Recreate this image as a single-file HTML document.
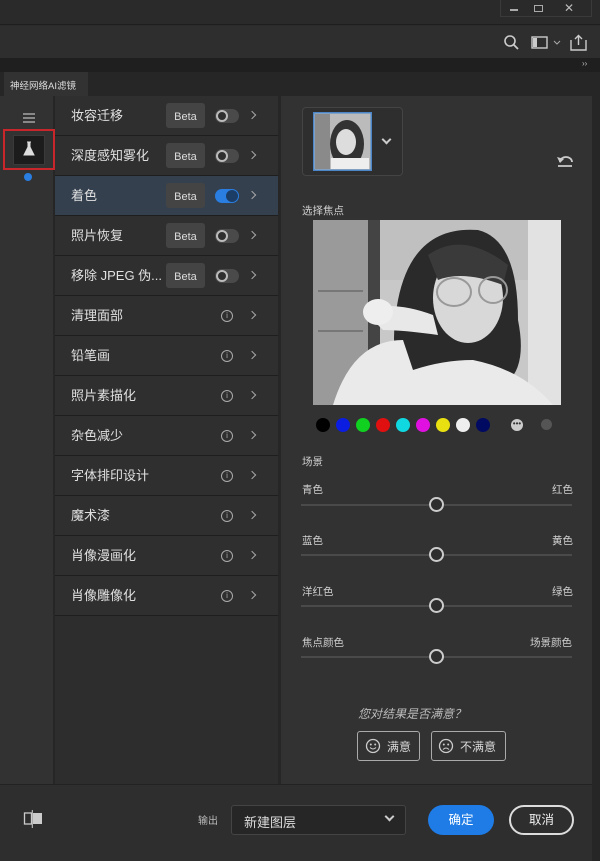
<!DOCTYPE html>
<html><head><meta charset="utf-8"><style>
*{margin:0;padding:0;box-sizing:border-box}
body{width:600px;height:861px;background:#2b2b2b;font-family:"Liberation Sans","Noto Sans CJK SC",sans-serif;color:#d8d8d8;position:relative;overflow:hidden}
.a{position:absolute}
.row{position:absolute;left:55px;width:223px;height:40px;background:#2f2f2f;border-bottom:1px solid #1e1e1e;font-size:13px}
.row .t{position:absolute;left:16px;top:10px;color:#e0e0e0;line-height:20px}
.beta{position:absolute;left:111px;top:7px;width:39px;height:25px;background:#444;border-radius:3px;font-size:11px;color:#ddd;display:flex;align-items:center;justify-content:center;padding-top:2px}
.tg{position:absolute;left:160px;top:13px;width:24px;height:14px;border-radius:7px;background:#4a4a4a}
.tg i{position:absolute;left:1px;top:1px;width:12px;height:12px;border-radius:50%;border:2px solid #bbb;background:#2f2f2f}
.chev{position:absolute;left:194px;top:16px;width:6px;height:6px;border-right:1.6px solid #aaa;border-top:1.6px solid #aaa;transform:rotate(45deg)}
.info{position:absolute;left:166px;top:14px;width:12px;height:12px;border:1.3px solid #aaa;border-radius:50%;font-size:8px;line-height:10px;text-align:center;color:#aaa}
.lbl{position:absolute;font-size:10.5px;color:#d0d0d0}
.sl{position:absolute;left:301px;width:271px;height:2px;background:#4a4a4a}
.kn{position:absolute;left:429px;width:15px;height:15px;border-radius:50%;border:2px solid #ccc;background:#2e2e2e}
.dot{position:absolute;top:418px;width:14px;height:14px;border-radius:50%}
</style></head><body>
<div class="a" style="left:0;top:0;width:600px;height:25px;background:#2a2a2a;border-bottom:1px solid #1e1e1e"></div>
<div class="a" style="left:500px;top:0;width:92px;height:17px;border:1px solid #3a3a3a;border-top:none"></div>
<div class="a" style="left:510px;top:9px;width:8px;height:2px;background:#aaa"></div>
<div class="a" style="left:534px;top:5px;width:9px;height:7px;border:1.5px solid #aaa"></div>
<div class="a" style="left:564px;top:1px;font-size:12px;color:#bbb">✕</div>
<div class="a" style="left:0;top:26px;width:600px;height:32px;background:#2e2e2e"></div>
<svg class="a" style="left:503px;top:34px" width="90" height="18"><circle cx="7" cy="7" r="5" fill="none" stroke="#ccc" stroke-width="1.6"/><line x1="11" y1="11" x2="15" y2="15" stroke="#ccc" stroke-width="1.8"/><rect x="29" y="3" width="15" height="11" fill="none" stroke="#ccc" stroke-width="1.4"/><rect x="30" y="4" width="4" height="9" fill="#ccc"/><path d="M51 7l3 3 3-3" stroke="#aaa" fill="none"/><path d="M68 6v10h15V6M75.5 2v9M72 5l3.5-3.5L79 5" stroke="#ccc" fill="none" stroke-width="1.4"/></svg>
<div class="a" style="left:0;top:58px;width:600px;height:14px;background:#1f1f1f"></div>
<div class="a" style="left:582px;top:59px;font-size:8px;color:#bbb">››</div>
<div class="a" style="left:0;top:72px;width:595px;height:24px;background:#262626"></div>
<div class="a" style="left:4px;top:72px;width:84px;height:24px;background:#323232;font-size:9.5px;color:#ddd;padding:6px 0 0 6px">神经网络AI滤镜</div>
<div class="a" style="left:0;top:96px;width:592px;height:688px;background:#323232"></div>
<div class="a" style="left:592px;top:72px;width:8px;height:789px;background:#262626"></div>
<div class="a" style="left:53px;top:96px;width:2px;height:688px;background:#262626"></div>
<div class="a" style="left:278px;top:96px;width:3px;height:688px;background:#262626"></div>
<div class="a" style="left:55px;top:96px;width:223px;height:688px;background:#2d2d2d"></div>
<div class="a" style="left:23px;top:113px;width:12px;height:1.5px;background:#888;box-shadow:0 4px 0 #888,0 8px 0 #888"></div>
<div class="a" style="left:3px;top:129px;width:52px;height:41px;border:2px solid #c8262b"></div>
<div class="a" style="left:13px;top:135px;width:32px;height:30px;background:#1c1c1c;border:1px solid #3a3a3a"></div>
<svg class="a" style="left:22px;top:141px" width="14" height="16"><path d="M5 1h4M6 1v5L2 14h10L8 6V1" fill="#ddd" stroke="#ddd"/></svg>
<div class="a" style="left:24px;top:173px;width:8px;height:8px;border-radius:50%;background:#2a7de1"></div>

<div class="row" style="top:96px"><span class="t">妆容迁移</span><div class="beta">Beta</div><div class="tg"><i></i></div><div class="chev"></div></div>
<div class="row" style="top:136px"><span class="t">深度感知雾化</span><div class="beta">Beta</div><div class="tg"><i></i></div><div class="chev"></div></div>
<div class="row" style="top:176px;background:#34404e"><span class="t">着色</span><div class="beta">Beta</div><div class="tg" style="background:#2a7de1"><i style="left:11px;border-color:#1b3d66;background:#1b3d66"></i></div><div class="chev"></div></div>
<div class="row" style="top:216px"><span class="t">照片恢复</span><div class="beta">Beta</div><div class="tg"><i></i></div><div class="chev"></div></div>
<div class="row" style="top:256px"><span class="t">移除 JPEG 伪...</span><div class="beta">Beta</div><div class="tg"><i></i></div><div class="chev"></div></div>
<div class="row" style="top:296px"><span class="t">清理面部</span><div class="info">i</div><div class="chev"></div></div>
<div class="row" style="top:336px"><span class="t">铅笔画</span><div class="info">i</div><div class="chev"></div></div>
<div class="row" style="top:376px"><span class="t">照片素描化</span><div class="info">i</div><div class="chev"></div></div>
<div class="row" style="top:416px"><span class="t">杂色减少</span><div class="info">i</div><div class="chev"></div></div>
<div class="row" style="top:456px"><span class="t">字体排印设计</span><div class="info">i</div><div class="chev"></div></div>
<div class="row" style="top:496px"><span class="t">魔术漆</span><div class="info">i</div><div class="chev"></div></div>
<div class="row" style="top:536px"><span class="t">肖像漫画化</span><div class="info">i</div><div class="chev"></div></div>
<div class="row" style="top:576px"><span class="t">肖像雕像化</span><div class="info">i</div><div class="chev"></div></div>

<div class="a" style="left:302px;top:107px;width:101px;height:69px;border:1px solid #444;border-radius:4px;background:#2e2e2e"></div>
<svg class="a" style="left:313px;top:112px" width="59" height="59"><rect x="0.5" y="0.5" width="58" height="58" fill="#bbb" stroke="#4a86c8" stroke-width="2"/><rect x="2" y="2" width="15" height="55" fill="#8a8a8a"/><ellipse cx="34" cy="32" rx="17" ry="24" fill="#333"/><ellipse cx="33" cy="30" rx="10" ry="13" fill="#ddd"/><rect x="18" y="46" width="38" height="11" fill="#eee"/></svg>
<div class="a" style="left:383px;top:136px;width:7px;height:7px;border-right:2px solid #ccc;border-bottom:2px solid #ccc;transform:rotate(45deg)"></div>
<svg class="a" style="left:556px;top:154px" width="18" height="14"><path d="M2 12h14M4 8a6 5 0 0 1 12 0" stroke="#ccc" fill="none" stroke-width="1.8"/><path d="M1 3l3 6 4-4z" fill="#ccc"/></svg>
<div class="lbl" style="left:302px;top:203px">选择焦点</div>
<svg class="a" style="left:313px;top:220px" width="248" height="185"><rect width="248" height="185" fill="#c8c8c8"/><rect x="0" y="0" width="55" height="185" fill="#9a9a9a"/><rect x="5" y="70" width="45" height="2" fill="#777"/><rect x="5" y="110" width="45" height="2" fill="#777"/><rect x="55" y="0" width="12" height="185" fill="#444"/><rect x="67" y="0" width="153" height="60" fill="#c0c0c0"/><rect x="215" y="0" width="33" height="185" fill="#e2e2e2"/><path d="M85 80 Q100 5 165 10 Q205 20 205 100 Q215 150 190 165 L90 170 Q75 130 85 80z" fill="#2a2a2a"/><ellipse cx="155" cy="78" rx="35" ry="45" fill="#d8d8d8"/><path d="M115 35 Q150 10 195 45 L190 65 Q150 50 125 60z" fill="#3a3a3a"/><ellipse cx="141" cy="72" rx="17" ry="14" fill="none" stroke="#999" stroke-width="2"/><ellipse cx="180" cy="70" rx="14" ry="13" fill="none" stroke="#999" stroke-width="2"/><path d="M50 90 Q80 80 120 95 L125 115 Q90 110 70 110z" fill="#e8e8e8"/><ellipse cx="65" cy="92" rx="15" ry="13" fill="#eee"/><path d="M20 185 Q40 120 90 120 L100 150 Q130 140 160 140 Q210 150 240 185z" fill="#eaeaea"/></svg>
<div class="dot" style="left:316px;background:#000"></div>
<div class="dot" style="left:336px;background:#0a1de0"></div>
<div class="dot" style="left:356px;background:#10d020"></div>
<div class="dot" style="left:376px;background:#e01010"></div>
<div class="dot" style="left:396px;background:#10d8e0"></div>
<div class="dot" style="left:416px;background:#e010e0"></div>
<div class="dot" style="left:436px;background:#e8e010"></div>
<div class="dot" style="left:456px;background:#eee"></div>
<div class="dot" style="left:476px;background:#000a60"></div>
<div class="a" style="left:511px;top:419px;width:12px;height:12px;border-radius:50%;background:#ccc;font-size:8px;color:#333;text-align:center;line-height:9px">•••</div>
<div class="a" style="left:541px;top:419px;width:11px;height:11px;border-radius:50%;background:#555"></div>
<div class="lbl" style="left:302px;top:454px">场景</div>
<div class="lbl" style="left:302px;top:482px">青色</div><div class="lbl" style="left:552px;top:482px">红色</div>
<div class="sl" style="top:504px"></div><div class="kn" style="top:497px"></div>
<div class="lbl" style="left:302px;top:533px">蓝色</div><div class="lbl" style="left:552px;top:533px">黄色</div>
<div class="sl" style="top:554px"></div><div class="kn" style="top:547px"></div>
<div class="lbl" style="left:302px;top:584px">洋红色</div><div class="lbl" style="left:552px;top:584px">绿色</div>
<div class="sl" style="top:605px"></div><div class="kn" style="top:598px"></div>
<div class="lbl" style="left:302px;top:635px">焦点颜色</div><div class="lbl" style="left:530px;top:635px">场景颜色</div>
<div class="sl" style="top:656px"></div><div class="kn" style="top:649px"></div>
<div class="a" style="left:358px;top:705px;font-size:12px;font-style:italic;color:#bbb">您对结果是否满意？</div>
<div class="a" style="left:357px;top:731px;width:63px;height:30px;border:1px solid #aaa;border-radius:3px;font-size:12px;padding:6px 0 0 29px">满意</div>
<div class="a" style="left:431px;top:731px;width:75px;height:30px;border:1px solid #aaa;border-radius:3px;font-size:12px;padding:6px 0 0 28px">不满意</div>
<svg class="a" style="left:365px;top:738px" width="16" height="16"><circle cx="8" cy="8" r="6.5" fill="none" stroke="#ccc" stroke-width="1.3"/><circle cx="5.8" cy="6.5" r="1" fill="#ccc"/><circle cx="10.2" cy="6.5" r="1" fill="#ccc"/><path d="M5 9.5q3 3 6 0" stroke="#ccc" fill="none"/></svg>
<svg class="a" style="left:438px;top:738px" width="16" height="16"><circle cx="8" cy="8" r="6.5" fill="none" stroke="#ccc" stroke-width="1.3"/><circle cx="5.8" cy="6.5" r="1" fill="#ccc"/><circle cx="10.2" cy="6.5" r="1" fill="#ccc"/><path d="M5 11.5q3 -3 6 0" stroke="#ccc" fill="none"/></svg>

<div class="a" style="left:0;top:784px;width:592px;height:77px;background:#2e2e2e;border-top:1px solid #222"></div>
<svg class="a" style="left:23px;top:810px" width="24" height="20"><rect x="1.5" y="3" width="7" height="11" fill="none" stroke="#ccc" stroke-width="1.3"/><rect x="10" y="3" width="9" height="11" fill="#ccc"/><line x1="9.3" y1="0" x2="9.3" y2="18" stroke="#ccc"/></svg>
<div class="a" style="left:198px;top:812px;font-size:10px;color:#bbb">输出</div>
<div class="a" style="left:231px;top:805px;width:175px;height:30px;border:1px solid #444;border-radius:3px;background:#262626;font-size:13px;color:#ddd;padding:6px 0 0 12px">新建图层</div>
<div class="a" style="left:386px;top:813px;width:7px;height:7px;border-right:2px solid #ccc;border-bottom:2px solid #ccc;transform:rotate(45deg)"></div>
<div class="a" style="left:428px;top:805px;width:66px;height:30px;border-radius:15px;background:#1f7ce6;color:#fff;font-size:12.5px;text-align:center;line-height:30px">确定</div>
<div class="a" style="left:509px;top:805px;width:65px;height:30px;border-radius:15px;border:2px solid #ddd;color:#eee;font-size:12.5px;text-align:center;line-height:26px">取消</div>
</body></html>
